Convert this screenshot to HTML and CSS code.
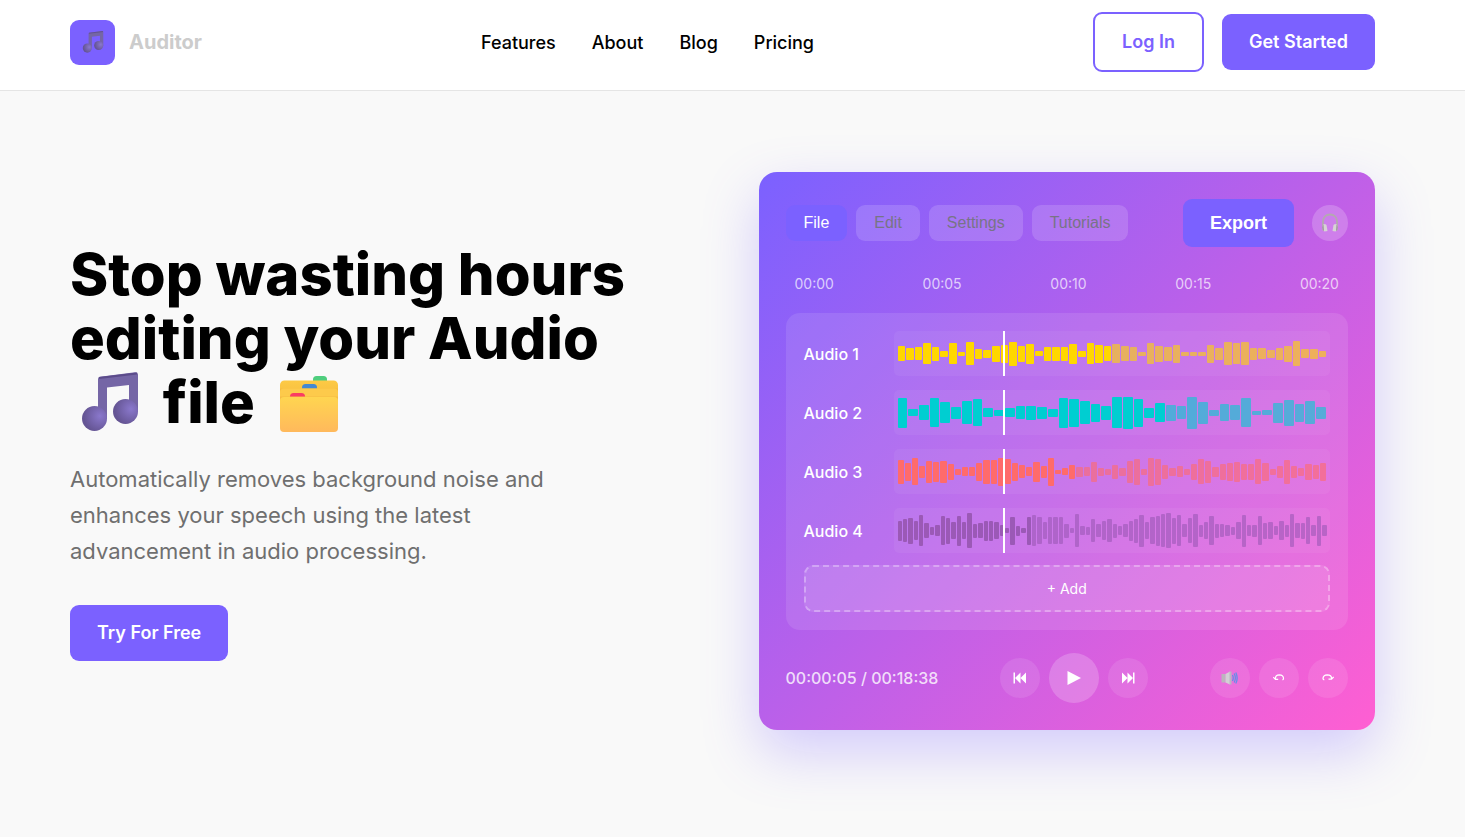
FILE: index.html
```html
<!DOCTYPE html>
<html lang="en">
<head>
<meta charset="utf-8">
<meta name="viewport" content="width=device-width, initial-scale=1">
<title>Auditor</title>
<link rel="stylesheet" href="styles.css">
</head>
<body>
<svg class="defs" width="0" height="0" aria-hidden="true">
  <defs>
    <radialGradient id="ball" cx=".72" cy=".4" r=".65"><stop offset="0" stop-color="#8a78cc"/><stop offset="1" stop-color="#655594"/></radialGradient>
    <linearGradient id="folder" x1="0" y1="0" x2="0" y2="1"><stop offset="0" stop-color="#ffd550"/><stop offset="1" stop-color="#ffb95c"/></linearGradient>
    <linearGradient id="folder-back" x1="0" y1="0" x2="0" y2="1"><stop offset="0" stop-color="#fdca45"/><stop offset="1" stop-color="#f2b43c"/></linearGradient>
    <symbol id="note" viewBox="0 0 56 60">
      <path d="M16 7Q16 5 18 4.700L53 .2Q56 0 56 2.500V40H47V13L25 15.500V47H16Z" fill="#7566a6"/>
      <path d="M17 6L55 1.500" stroke="#5c4c8b" stroke-width="2"/>
      <circle cx="12.500" cy="46.500" r="12.500" fill="url(#ball)"/>
      <circle cx="43.500" cy="39.500" r="12.500" fill="url(#ball)"/>
    </symbol>
  </defs>
</svg>

<header class="header">
  <a class="brand" href="#">
    <span class="brand-mark"><svg class="brand-note" aria-hidden="true"><use href="#note"/></svg></span>
    <span>Auditor</span>
  </a>
  <nav class="nav">
    <a href="#">Features</a>
    <a href="#">About</a>
    <a href="#">Blog</a>
    <a href="#">Pricing</a>
  </nav>
  <div class="actions">
    <button class="btn btn-outline" type="button">Log In</button>
    <button class="btn" type="button">Get Started</button>
  </div>
</header>

<main class="hero">
  <section class="intro">
    <h1>Stop wasting hours editing your Audio <svg class="note-icon" role="img" aria-label="music"><use href="#note"/></svg> file <svg class="folder-icon" viewBox="0 0 58 56" role="img" aria-label="folders">
      <rect x="33" y="0" width="14" height="9" rx="3.500" fill="#4fce7e"/>
      <rect x="0" y="4.500" width="58" height="30" rx="4.500" fill="url(#folder-back)"/>
      <rect x="22" y="8" width="15" height="10" rx="3.500" fill="#4388d2"/>
      <path d="M0 12.500H58V36H0Z" fill="#f6bb40"/>
      <rect x="0" y="12.500" width="58" height="24" rx="4" fill="#fdca4b"/>
      <rect x="10" y="17" width="15" height="10" rx="3.500" fill="#fa3c63"/>
      <path d="M0 20.500H58V30H0Z" fill="#f6bb44"/>
      <rect x="0" y="21" width="58" height="35" rx="4" fill="url(#folder)"/>
    </svg></h1>
    <p>Automatically removes background noise and enhances your speech using the latest advancement in audio processing.</p>
    <button class="btn" type="button">Try For Free</button>
  </section>

  <section class="editor" aria-label="Audio editor">
    <div class="toolbar">
      <div class="tabs">
        <button class="tab tab-active" type="button">File</button>
        <button class="tab" type="button">Edit</button>
        <button class="tab" type="button">Settings</button>
        <button class="tab" type="button">Tutorials</button>
      </div>
      <div class="toolbar-end">
        <button class="export" type="button">Export</button>
        <span class="avatar">
          <svg width="18" height="20" viewBox="0 0 18 20" aria-hidden="true">
            <path d="M2 13V8.500C2 4 5 1.500 9 1.500S16 4 16 8.500V13" fill="none" stroke="#b4a9b0" stroke-width="1.800"/>
            <path d="M4 11L2 11.500Q.5 14 1.500 17L3.500 18.500L6.500 18L5.500 12Z" fill="#d8d3d6"/>
            <path d="M14 11L16 11.500Q17.500 14 16.500 17L14.500 18.500L11.500 18L12.500 12Z" fill="#d8d3d6"/>
            <path d="M2 11.500Q.5 14 1.500 17L3 18L2.500 12ZM16 11.500Q17.500 14 16.500 17L15 18L15.500 12Z" fill="#9c929c"/>
          </svg>
        </span>
      </div>
    </div>

    <div class="timeline"><span>00:00</span><span>00:05</span><span>00:10</span><span>00:15</span><span>00:20</span></div>

    <div class="panel">
      <div class="tracks">
        <div class="track"><span class="track-name">Audio 1</span><div class="wave wave-yellow" data-wave="0"></div></div>
        <div class="track"><span class="track-name">Audio 2</span><div class="wave wave-teal" data-wave="1"></div></div>
        <div class="track"><span class="track-name">Audio 3</span><div class="wave wave-coral" data-wave="2"></div></div>
        <div class="track"><span class="track-name">Audio 4</span><div class="wave wave-purple" data-wave="3"></div></div>
      </div>
      <button class="add" type="button">+ Add</button>
    </div>

    <div class="controls">
      <span class="time">00:00:05 / 00:18:38</span>
      <div class="control-group">
        <button class="round" type="button" aria-label="Previous"><svg width="14" height="12" viewBox="0 0 14 12"><path d="M.5.500H2V11.500H.5ZM7.500.500V11.500L2 6ZM13 .5V11.500L7.500 6Z" fill="#fff"/></svg></button>
        <button class="round round-play" type="button" aria-label="Play"><svg width="14" height="14" viewBox="0 0 14 14"><path d="M.5 0L14 7L.5 14Z" fill="#fff"/></svg></button>
        <button class="round" type="button" aria-label="Next"><svg width="14" height="12" viewBox="0 0 14 12"><path d="M13.500.500H12V11.500H13.500ZM6.500.500V11.500L12 6ZM1 .5V11.500L6.500 6Z" fill="#fff"/></svg></button>
      </div>
      <div class="control-group">
        <button class="round" type="button" aria-label="Volume"><svg width="17" height="14" viewBox="0 0 17 14"><path d="M.5 3H4.500V11.500H.5Z" fill="#bcb5be"/><path d="M4.500 3L9 .5V13.500L4.500 11.500Z" fill="#d4d0d6"/><path d="M8.500 .5H10.500V13.500H8.500Z" fill="#bdb6c3"/><path d="M11.500 4Q13 7 11.500 10M13.200 2.500Q15.500 7 13.200 11.500M14.800 1.500Q17.500 7 14.800 12.500" fill="none" stroke="#638fe8" stroke-width="1.300"/></svg></button>
        <button class="round" type="button" aria-label="Undo"><svg class="lift" width="12" height="7" viewBox="0 0 12 7"><path d="M2.500 5V4Q2.500 1 6.300 .8Q10.500 1 10.500 4.500Q10.500 5.500 9.500 6M.3 3.200L2.500 5.400L5.200 5.400" fill="none" stroke="#fff" stroke-width="1.200"/></svg></button>
        <button class="round" type="button" aria-label="Redo"><svg class="lift" width="12" height="7" viewBox="0 0 12 7"><path d="M9.500 5V4Q9.500 1 5.200 .8Q1.200 1 1 4.500Q1 5.500 2.300 6M11.700 3L9.500 5.200L6.500 5.200" fill="none" stroke="#fff" stroke-width="1.300"/></svg></button>
      </div>
    </div>
  </section>
</main>
<script src="waves.js"></script>
</body>
</html>
```
FILE: styles.css
```css
* { box-sizing: border-box; }

body {
  margin: 0;
  background: #f9f9f9;
  color: #000;
  font-family: Inter, sans-serif;
  font-size: 18px;
}

button { font: inherit; cursor: pointer; }
a { color: inherit; text-decoration: none; }
.defs { position: absolute; }

.header {
  display: flex;
  align-items: center;
  justify-content: space-between;
  padding: 12px 90px 18px 70px;
  background: #fff;
  border-bottom: 1px solid #e5e5e5;
}

.brand {
  display: flex;
  align-items: center;
  gap: 14px;
  color: #ccc;
  font-size: 20px;
  font-weight: 700;
}

.brand-mark {
  display: flex;
  align-items: center;
  justify-content: center;
  width: 45px;
  height: 45px;
  border-radius: 9px;
  background: #7b61ff;
}

.brand-note { width: 22px; height: 22px; }

.nav { display: flex; gap: 36px; font-weight: 500; }

.actions { display: flex; align-items: center; gap: 18px; }

.btn {
  padding: 17px 27px;
  border: 0;
  border-radius: 9px;
  background: #7b61ff;
  color: #fff;
  font-weight: 600;
  line-height: 22px;
}

.btn-outline {
  border: 2px solid #7b61ff;
  background: transparent;
  color: #7b61ff;
}

.hero {
  display: grid;
  grid-template-columns: 1fr 1fr;
  gap: 72px;
  align-items: center;
  padding: 81px 90px 81px 70px;
}

h1 {
  margin: 0 0 27px;
  font-size: 58px;
  font-weight: 800;
  line-height: 64px;
}

.note-icon { width: 56px; height: 60px; margin: 0 12px; vertical-align: -9px; }
.folder-icon { width: 58px; height: 56px; margin-left: 12px; vertical-align: -9px; }

.intro p {
  max-width: 540px;
  margin: 0 0 36px;
  color: #6f6f6f;
  font-size: 22px;
  line-height: 36px;
}

.editor {
  padding: 27px;
  border-radius: 18px;
  background: linear-gradient(135deg, #7b61ff 0%, #ff5fd2 100%);
  box-shadow: 0 22px 56px rgba(123, 97, 255, 0.3);
}

.toolbar, .toolbar-end, .controls, .timeline {
  display: flex;
  align-items: center;
  justify-content: space-between;
}

.tabs, .control-group { display: flex; align-items: center; gap: 9px; }

.tab {
  height: 36px;
  padding: 0 18px;
  border: 0;
  border-radius: 9px;
  background: rgba(255, 255, 255, 0.15);
  color: #787486;
  font-family: "Liberation Sans", Arial, sans-serif;
  font-size: 16px;
}

.tab-active { background: #7b61ff; color: #fff; }
.toolbar-end { gap: 18px; }

.export {
  height: 48px;
  padding: 0 27px;
  border: 0;
  border-radius: 9px;
  background: #7b61ff;
  color: #fff;
  font-family: "Liberation Sans", Arial, sans-serif;
  font-weight: 700;
}

.avatar {
  display: flex;
  align-items: center;
  justify-content: center;
  width: 36px;
  height: 36px;
  border-radius: 50%;
  background: rgba(255, 255, 255, 0.2);
}

.timeline {
  margin: 26px 0 18px;
  padding: 0 9px;
  color: rgba(255, 255, 255, 0.7);
  font-size: 14px;
  line-height: 22px;
}

.panel {
  padding: 18px;
  border-radius: 14px;
  background: rgba(255, 255, 255, 0.1);
}

.tracks { display: grid; gap: 14px; }
.track { display: flex; align-items: center; gap: 18px; }

.track-name {
  width: 72px;
  color: #fff;
  font-size: 16px;
  font-weight: 500;
}

.wave {
  position: relative;
  display: flex;
  flex: 1;
  align-items: center;
  gap: 1px;
  height: 45px;
  padding: 0 4px;
  border-radius: 5px;
  background: rgba(255, 255, 255, 0.05);
}

.wave::after {
  content: "";
  position: absolute;
  top: 0;
  bottom: 0;
  left: 25%;
  width: 2px;
  background: #fff;
}

.bar { flex: 1; border-radius: 1px; background: currentColor; opacity: 0.6; }
.bar-played { opacity: 1; }
.wave-yellow { color: #ffd700; }
.wave-teal { color: #00ced1; }
.wave-coral { color: #ff6b6b; }
.wave-purple { color: #9b59b6; }

.add {
  display: block;
  width: 100%;
  height: 47px;
  margin-top: 12px;
  padding: 0;
  border: 2px dashed rgba(255, 255, 255, 0.3);
  border-radius: 9px;
  background: rgba(255, 255, 255, 0.1);
  color: #fff;
  font-size: 14px;
}

.controls { margin-top: 23px; }

.time { color: rgba(255, 255, 255, 0.8); font-size: 16px; font-weight: 500; }

.round {
  display: flex;
  align-items: center;
  justify-content: center;
  width: 40px;
  height: 40px;
  padding: 0;
  border: 0;
  border-radius: 50%;
  background: rgba(255, 255, 255, 0.1);
}

.round-play { width: 50px; height: 50px; background: rgba(255, 255, 255, 0.2); }
.lift { margin-bottom: 2px; }
```
FILE: waves.js
```js
const waves = [
  [15,12,13,21,14,6,21,4,23,10,8,16,18,24,16,20,5,14,14,14,20,6,21,18,15,19,15,14,4,21,16,14,18,4,4,4,18,12,23,21,23,12,11,8,12,16,25,9,10,6],
  [30,7,15,29,21,12,23,27,9,6,9,13,14,12,8,30,28,23,18,14,31,32,28,10,19,16,13,32,22,6,17,15,29,4,5,20,26,18,23,12],
  [24,18,27,12,22,20,22,16,6,9,9,18,24,24,28,25,18,13,9,20,12,28,4,7,14,10,9,20,8,6,14,8,22,26,6,28,26,14,8,11,6,16,25,22,10,16,18,20,16,16,25,18,6,12,24,12,8,16,14,18],
  [20,23,26,19,31,15,8,11,29,26,17,30,17,35,14,15,20,20,17,11,5,28,10,5,28,31,27,17,27,27,27,14,5,33,9,8,23,13,19,23,14,9,13,20,24,32,17,27,30,33,35,26,31,13,25,33,12,17,29,14,13,11,8,17,32,11,12,29,16,17,9,19,12,33,15,16,27,11,30,11]
];
const playedBars = 25;

document.querySelectorAll(".wave").forEach((wave) => {
  waves[wave.dataset.wave].forEach((height, index) => {
    const bar = document.createElement("span");
    bar.className = index < playedBars ? "bar bar-played" : "bar";
    bar.style.height = height + "px";
    wave.append(bar);
  });
});
```
